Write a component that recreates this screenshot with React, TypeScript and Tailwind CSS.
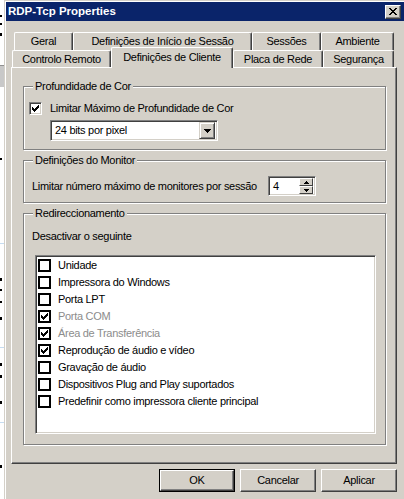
import React from 'react'

// classic 7x7 tick, drawn pixel by pixel
const Tick = ({ className = 'fill-black' }: { className?: string }) => (
  <svg width="7" height="7" viewBox="0 0 7 7" shapeRendering="crispEdges" className={className}>
    <path d="M6 0h1v1h-1z M5 1h2v1h-2z M0 2h1v1h-1z M4 2h3v1h-3z M0 3h2v1h-2z M3 3h3v1h-3z M0 4h5v1h-5z M1 5h3v1h-3z M2 6h1v1h-1z" />
  </svg>
)

const Tab = ({ label, className }: { label: string; className: string }) => (
  <div
    className={`flex items-center justify-center bg-[#d4d0c8] border-t border-l border-white border-r border-r-[#404040] rounded-t-[2px] shadow-[inset_-1px_0_0_#808080] whitespace-nowrap ${className}`}
  >
    {label}
  </div>
)

const Button = ({ label, isDefault }: { label: string; isDefault?: boolean }) => (
  <div className={`w-[76px] h-[23px] ${isDefault ? 'border border-black' : ''}`}>
    <div className="w-full h-full flex items-center justify-center border-t border-l border-white border-r border-b border-r-[#404040] border-b-[#404040] shadow-[inset_-1px_-1px_0_#808080]">
      {label}
    </div>
  </div>
)

const Group = ({
  title,
  className,
  bodyClassName,
  children,
}: {
  title: string
  className: string
  bodyClassName: string
  children: React.ReactNode
}) => (
  <fieldset className={`border border-[#808080] shadow-[inset_1px_1px_0_#fff,1px_1px_0_#fff] ${className}`}>
    <legend className="ml-[9px] px-[2px] leading-[13px] bg-[#d4d0c8]">{title}</legend>
    <div className={bodyClassName}>{children}</div>
  </fieldset>
)

interface Item {
  label: string
  checked: boolean
  disabled?: boolean
}

const items: Item[] = [
  { label: 'Unidade', checked: false },
  { label: 'Impressora do Windows', checked: false },
  { label: 'Porta LPT', checked: false },
  { label: 'Porta COM', checked: true, disabled: true },
  { label: 'Área de Transferência', checked: true, disabled: true },
  { label: 'Reprodução de áudio e vídeo', checked: true },
  { label: 'Gravação de áudio', checked: false },
  { label: 'Dispositivos Plug and Play suportados', checked: false },
  { label: 'Predefinir como impressora cliente principal', checked: false },
]

export default function App() {
  return (
    <div className="w-[404px] h-[499px] overflow-hidden flex bg-white text-black font-['Liberation_Sans',Arial,sans-serif] text-[11px] tracking-[-0.3px] leading-[13px]">
      {/* edge of the window behind */}
      <div className="w-[4px] shrink-0 flex flex-col">
        <div className="mt-[15px] h-[2px] w-[2px] bg-black" />
        <div className="mt-[6px] h-[2px] w-[2px] bg-black" />
        <div className="mt-[8px] h-[3px] w-[2px] bg-black" />
        <div className="mt-[29px] h-[22px] w-[4px] bg-[#c8c8c8] border-t border-[#909090]" />
        <div className="mt-[71px] h-[2px] w-[2px] bg-black" />
        <div className="mt-[83px] h-px w-[4px] bg-[#c6dcf0]" />
        <div className="mt-[34px] h-[3px] w-[2px] bg-black" />
        <div className="mt-[8px] h-[2px] w-[2px] bg-black" />
        <div className="mt-[10px] h-[2px] w-[2px] bg-black" />
        <div className="mt-[14px] h-[3px] w-[2px] bg-black" />
        <div className="mt-[27px] h-px w-[4px] bg-[#c6dcf0]" />
        <div className="mt-[15px] h-[3px] w-[2px] bg-black" />
        <div className="mt-[9px] h-[3px] w-[2px] bg-black" />
        <div className="mt-[23px] h-[3px] w-[2px] bg-black" />
        <div className="mt-[18px] h-px w-[4px] bg-[#c6dcf0]" />
        <div className="mt-[42px] h-[3px] w-[2px] bg-black" />
      </div>

      {/* dialog window */}
      <div className="w-[400px] shrink-0 border-l border-t border-[#d4d0c8] bg-[#d4d0c8]">
        <div className="h-full border-l border-t border-white">
          {/* title bar */}
          <div className="h-[19px] w-[398px] bg-[#0a246a] flex items-center justify-between pl-[2px] pr-[3px]">
            <span className="text-white font-bold text-[11.5px] tracking-normal">RDP-Tcp Properties</span>
            <div className="w-[16px] h-[14px] bg-[#d4d0c8] flex items-center justify-center border-t border-l border-white border-r border-b border-r-[#404040] border-b-[#404040] shadow-[inset_-1px_-1px_0_#808080]">
              <svg width="8" height="7" viewBox="0 0 8 7" shapeRendering="crispEdges" className="fill-black">
                <path d="M0 0h2v1h-2z M6 0h2v1h-2z M1 1h2v1h-2z M5 1h2v1h-2z M2 2h4v1h-4z M3 3h2v1h-2z M2 4h4v1h-4z M1 5h2v1h-2z M5 5h2v1h-2z M0 6h2v1h-2z M6 6h2v1h-2z" />
              </svg>
            </div>
          </div>

          {/* tabs, back row */}
          <div className="mt-[11px] ml-[8px] flex h-[18px]">
            <Tab label="Geral" className="w-[59px] h-[18px]" />
            <Tab label="Definições de Início de Sessão" className="w-[179px] h-[18px]" />
            <Tab label="Sessões" className="w-[69px] h-[18px]" />
            <Tab label="Ambiente" className="w-[73px] h-[18px]" />
          </div>
          {/* tabs, front row */}
          <div className="-mt-[3px] ml-[6px] flex items-end h-[20px] relative z-10">
            <Tab label="Controlo Remoto" className="w-[99px] h-[17px]" />
            <Tab label="Definições de Cliente" className="w-[122px] h-[21px] -mb-px pb-px" />
            <Tab label="Placa de Rede" className="w-[90px] h-[17px]" />
            <Tab label="Segurança" className="w-[71px] h-[17px]" />
          </div>

          {/* tab page */}
          <div className="ml-[5px] w-[386px] h-[397px] border-t border-l border-white border-r border-b border-r-[#404040] border-b-[#404040] shadow-[inset_-1px_-1px_0_#808080] pl-[11px] pt-[12px]">
            <Group title="Profundidade de Cor" className="w-[363px] h-[70px]" bodyClassName="pl-[5px]">
              <div className="mt-[9px] flex items-center h-[13px]">
                <div className="w-[13px] h-[13px] bg-white flex items-center justify-center border-t border-l border-[#808080] border-r border-b border-r-white border-b-white shadow-[inset_1px_1px_0_#404040,inset_-1px_-1px_0_#d4d0c8]">
                  <Tick />
                </div>
                <span className="ml-[8px]">Limitar Máximo de Profundidade de Cor</span>
              </div>
              <div className="mt-[5px] ml-[21px] w-[168px] h-[21px] bg-white flex items-center border-t border-l border-[#808080] border-r border-b border-r-white border-b-white shadow-[inset_1px_1px_0_#404040,inset_-1px_-1px_0_#d4d0c8] pl-[4px] pr-[2px]">
                <span className="flex-1">24 bits por pixel</span>
                <div className="w-[16px] h-[17px] bg-[#d4d0c8] flex items-center justify-center border-t border-l border-[#d4d0c8] border-r border-b border-r-[#404040] border-b-[#404040] shadow-[inset_1px_1px_0_#fff,inset_-1px_-1px_0_#808080]">
                  <svg width="7" height="4" viewBox="0 0 7 4" shapeRendering="crispEdges" className="fill-black">
                    <path d="M0 0h7v1h-7z M1 1h5v1h-5z M2 2h3v1h-3z M3 3h1v1h-1z" />
                  </svg>
                </div>
              </div>
            </Group>

            <Group title="Definições do Monitor" className="mt-[4px] w-[363px] h-[49px]" bodyClassName="pl-[8px]">
              <div className="mt-[9px] flex items-center h-[20px]">
                <span className="w-[236px]">Limitar número máximo de monitores por sessão</span>
                <div className="w-[48px] h-[20px] bg-white flex items-center border-t border-l border-[#808080] border-r border-b border-r-white border-b-white shadow-[inset_1px_1px_0_#404040,inset_-1px_-1px_0_#d4d0c8] pl-[4px] pr-[2px]">
                  <span className="flex-1">4</span>
                  <div className="flex flex-col">
                    <div className="w-[14px] h-[8px] bg-[#d4d0c8] flex items-center justify-center border-t border-l border-white border-r border-b border-r-[#404040] border-b-[#404040]">
                      <svg width="5" height="3" viewBox="0 0 5 3" shapeRendering="crispEdges" className="fill-black">
                        <path d="M2 0h1v1h-1z M1 1h3v1h-3z M0 2h5v1h-5z" />
                      </svg>
                    </div>
                    <div className="w-[14px] h-[8px] bg-[#d4d0c8] flex items-center justify-center border-t border-l border-white border-r border-b border-r-[#404040] border-b-[#404040]">
                      <svg width="5" height="3" viewBox="0 0 5 3" shapeRendering="crispEdges" className="fill-black">
                        <path d="M0 0h5v1h-5z M1 1h3v1h-3z M2 2h1v1h-1z" />
                      </svg>
                    </div>
                  </div>
                </div>
              </div>
            </Group>

            <Group title="Redireccionamento" className="mt-[4px] w-[363px] h-[238px]" bodyClassName="pl-[8px]">
              <div className="mt-[10px]">Desactivar o seguinte</div>
              <div className="mt-[12px] ml-[3px] w-[341px] h-[179px] bg-white border-t border-l border-[#808080] border-r border-b border-r-white border-b-white shadow-[inset_1px_1px_0_#404040,inset_-1px_-1px_0_#d4d0c8] p-px">
                {items.map((item) => (
                  <div key={item.label} className="h-[17px] flex items-center pl-[1px]">
                    <div className="w-[13px] h-[13px] border-2 border-black bg-white flex items-center justify-center">
                      {item.checked && <Tick />}
                    </div>
                    <span className={`ml-[7px] ${item.disabled ? 'text-[#8c8c8c]' : ''}`}>{item.label}</span>
                  </div>
                ))}
              </div>
            </Group>
          </div>

          {/* dialog buttons */}
          <div className="mt-[5px] ml-[153px] flex gap-[5px]">
            <Button label="OK" isDefault />
            <Button label="Cancelar" />
            <Button label="Aplicar" />
          </div>
        </div>
      </div>
    </div>
  )
}
